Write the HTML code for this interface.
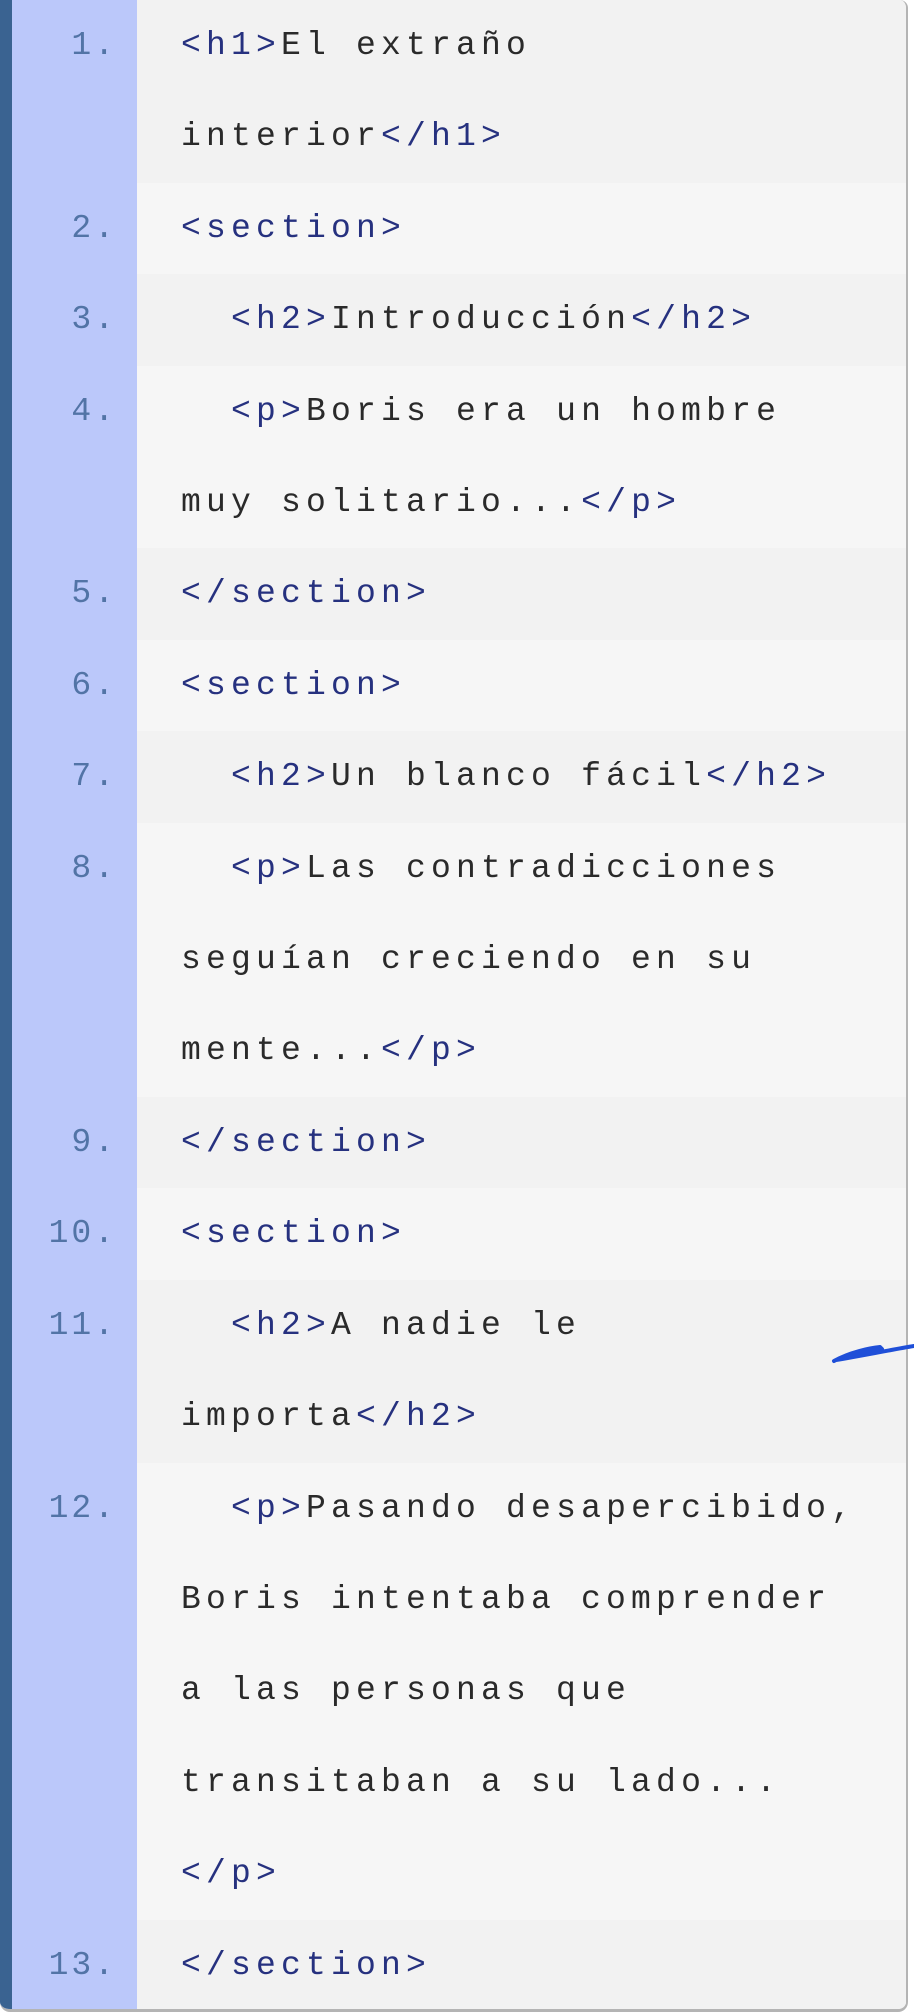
<!DOCTYPE html>
<html><head><meta charset="utf-8"><style>
html,body{margin:0;padding:0;background:#fff;width:914px;height:2014px;overflow:hidden}
.box{position:absolute;left:0;top:0;width:906px;height:2009px;border-right:2px solid #b4b4b4;border-bottom:3px solid #b4b4b4;border-radius:0 8px 10px 10px;overflow:hidden;background:#f6f6f6}
.bar{position:absolute;left:0;top:0;width:12px;height:100%;background:#3a6391}
.rows{position:absolute;left:0;top:0;width:100%}
.r{display:flex;font-family:"Liberation Mono","Cousine","DejaVu Sans Mono","Courier New",Courier,monospace;font-size:33px;letter-spacing:5.2px;line-height:91.4px}
.r:nth-child(odd){background:#f2f2f2}
.n{width:137px;flex:none;text-align:right;padding-right:20px;box-sizing:border-box;color:#5274a6;background:#bbc8fa;letter-spacing:3px;position:relative}
.c{padding-left:44px;color:#2a2a2a;white-space:pre}
.t{color:#26317f}
</style></head><body>
<div class="box">
<div class="rows">
<div class="r"><div class="n">1.</div><div class="c"><span class="t">&lt;h1&gt;</span>El extraño
interior<span class="t">&lt;/h1&gt;</span></div></div>
<div class="r"><div class="n">2.</div><div class="c"><span class="t">&lt;section&gt;</span></div></div>
<div class="r"><div class="n">3.</div><div class="c">  <span class="t">&lt;h2&gt;</span>Introducción<span class="t">&lt;/h2&gt;</span></div></div>
<div class="r"><div class="n">4.</div><div class="c">  <span class="t">&lt;p&gt;</span>Boris era un hombre
muy solitario...<span class="t">&lt;/p&gt;</span></div></div>
<div class="r"><div class="n">5.</div><div class="c"><span class="t">&lt;/section&gt;</span></div></div>
<div class="r"><div class="n">6.</div><div class="c"><span class="t">&lt;section&gt;</span></div></div>
<div class="r"><div class="n">7.</div><div class="c">  <span class="t">&lt;h2&gt;</span>Un blanco fácil<span class="t">&lt;/h2&gt;</span></div></div>
<div class="r"><div class="n">8.</div><div class="c">  <span class="t">&lt;p&gt;</span>Las contradicciones
seguían creciendo en su
mente...<span class="t">&lt;/p&gt;</span></div></div>
<div class="r"><div class="n">9.</div><div class="c"><span class="t">&lt;/section&gt;</span></div></div>
<div class="r"><div class="n">10.</div><div class="c"><span class="t">&lt;section&gt;</span></div></div>
<div class="r"><div class="n">11.</div><div class="c">  <span class="t">&lt;h2&gt;</span>A nadie le
importa<span class="t">&lt;/h2&gt;</span></div></div>
<div class="r"><div class="n">12.</div><div class="c">  <span class="t">&lt;p&gt;</span>Pasando desapercibido,
Boris intentaba comprender
a las personas que
transitaban a su lado...
<span class="t">&lt;/p&gt;</span></div></div>
<div class="r"><div class="n">13.</div><div class="c"><span class="t">&lt;/section&gt;</span></div></div>
</div>
<div class="bar"></div>
</div>
<svg style="position:absolute;left:0;top:0" width="914" height="2014"><path d="M834 1361 C850 1352 870 1348 880 1347 L882 1349 C870 1352 850 1356 836 1360 C860 1356 890 1350 914 1346" fill="none" stroke="#1f4fd8" stroke-width="4" stroke-linecap="round" stroke-linejoin="round"/></svg>
</body></html>
